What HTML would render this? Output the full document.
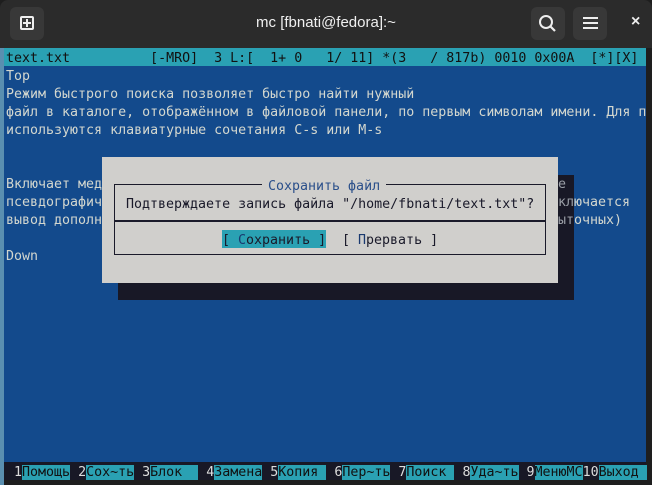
<!DOCTYPE html>
<html><head><meta charset="utf-8"><style>
*{margin:0;padding:0;box-sizing:border-box}
body{width:652px;height:485px;background:#1e1e1e;position:relative;overflow:hidden;font-family:"DejaVu Sans Mono","Liberation Mono",monospace}
.tb{position:absolute;left:0;top:0;width:652px;height:48px;background:#2b2b2b;border-radius:8px 8px 0 0}
.btn{position:absolute;top:7px;width:34px;height:33px;background:#383838;border-radius:6px}
.title{position:absolute;left:0;width:652px;top:14px;text-align:center;color:#f0f0f0;font:15px "Liberation Sans",sans-serif}
.term{position:absolute;left:4px;top:48px;width:642px;height:432px;background:#134a8c}
.row{position:absolute;left:6px;height:18px;line-height:22px;font-size:13.3px;color:#d3d7cf;white-space:pre}
.st{position:absolute;left:4px;top:48px;width:642px;height:18px;background:#2aa1b3}
.dlg{position:absolute;left:102px;top:157px;width:456px;height:126px;background:#d0cfcc}
.sh{position:absolute;background:#181826}
.box{position:absolute;left:114px;top:184px;width:432px;height:71px;border:1.5px solid #1a1a2a}
.d{position:absolute;height:18px;line-height:22px;font-size:13.3px;white-space:pre;color:#1a1a2a}
.fk{position:absolute;top:462px;height:18px;line-height:21px;font-size:13.3px;white-space:pre}
.n{position:absolute;top:462px;height:18px;background:#181826}
</style></head><body>
<div style="position:absolute;left:0;top:48px;width:4px;height:437px;background:#5a8fb0"></div>
<div class="tb">
<div class="btn" style="left:10px"><div style="position:absolute;left:10px;top:9px;width:14px;height:14px;border:2px solid #eee;border-radius:2px"></div><div style="position:absolute;left:16px;top:12px;width:2px;height:8px;background:#eee"></div><div style="position:absolute;left:13px;top:15px;width:8px;height:2px;background:#eee"></div></div>
<div class="title">mc [fbnati@fedora]:~</div>
<div class="btn" style="left:531px"><svg width="34" height="33"><circle cx="15" cy="15" r="6" stroke="#eee" stroke-width="2" fill="none"/><line x1="19.5" y1="19.5" x2="24" y2="24" stroke="#eee" stroke-width="2.2"/></svg></div>
<div class="btn" style="left:573px"><div style="position:absolute;left:10px;top:10px;width:15px;height:2px;background:#eee"></div><div style="position:absolute;left:10px;top:15px;width:15px;height:2px;background:#eee"></div><div style="position:absolute;left:10px;top:20px;width:15px;height:2px;background:#eee"></div></div>
<div style="position:absolute;left:631px;top:13px;color:#eee;font:bold 16px 'Liberation Sans',sans-serif">×</div>
</div>
<div class="term"></div>
<div class="st"></div>
<div class="row" style="top:48px;color:#111">text.txt          [-MRO]  3 L:[  1+ 0   1/ 11] *(3   / 817b) 0010 0x00A  [*][X]</div>
<div class="row" style="top:66px">Top</div>
<div class="row" style="top:84px">Режим быстрого поиска позволяет быстро найти нужный</div>
<div class="row" style="top:102px">файл в каталоге, отображённом в файловой панели, по первым символам имени. Для п</div>
<div class="row" style="top:120px">используются клавиатурные сочетания C-s или M-s</div>
<div class="row" style="top:174px">Включает мед</div>
<div class="row" style="top:192px">псевдографич</div>
<div class="row" style="top:210px">вывод дополн</div>
<div class="row" style="top:246px">Down</div>
<div class="sh" style="left:118px;top:283px;width:456px;height:17px"></div>
<div class="sh" style="left:558px;top:175px;width:16px;height:110px"></div>
<div class="row" style="top:174px;left:558px;color:#9a9ea6">е</div>
<div class="row" style="top:192px;left:558px"><span style="color:#9a9ea6">кл</span>ючается</div>
<div class="row" style="top:210px;left:558px"><span style="color:#9a9ea6">ыт</span>очных)</div>
<div class="dlg"></div>
<div class="box"></div>
<div style="position:absolute;left:114px;top:220px;width:432px;height:1.5px;background:#1a1a2a"></div>
<div class="d" style="left:262px;top:176px;background:#d0cfcc;color:#2a4f8a;padding:0 6px;height:16px">Сохранить файл</div>
<div class="d" style="left:126px;top:194px">Подтверждаете запись файла "/home/fbnati/text.txt"?</div>
<div class="d" style="left:222px;top:230px;background:#2aa1b3;width:104px"><span style="color:#1a1a2a">[ </span><span style="color:#1a3a70">С</span>охранить ]</div>
<div class="d" style="left:342px;top:230px">[ <span style="color:#1a3a70">П</span>рервать ]</div>
<div class="n" style="left:4px;width:642px"></div>
<div class="fk" style="left:6px;color:#ddd"> 1<span style="background:#2aa1b3;color:#111">Помощь</span> 2<span style="background:#2aa1b3;color:#111">Сох~ть</span> 3<span style="background:#2aa1b3;color:#111">Блок  </span> 4<span style="background:#2aa1b3;color:#111">Замена</span> 5<span style="background:#2aa1b3;color:#111">Копия </span> 6<span style="background:#2aa1b3;color:#111">Пер~ть</span> 7<span style="background:#2aa1b3;color:#111">Поиск </span> 8<span style="background:#2aa1b3;color:#111">Уда~ть</span> 9<span style="background:#2aa1b3;color:#111">МенюМС</span>10<span style="background:#2aa1b3;color:#111">Выход </span></div>
</body></html>
